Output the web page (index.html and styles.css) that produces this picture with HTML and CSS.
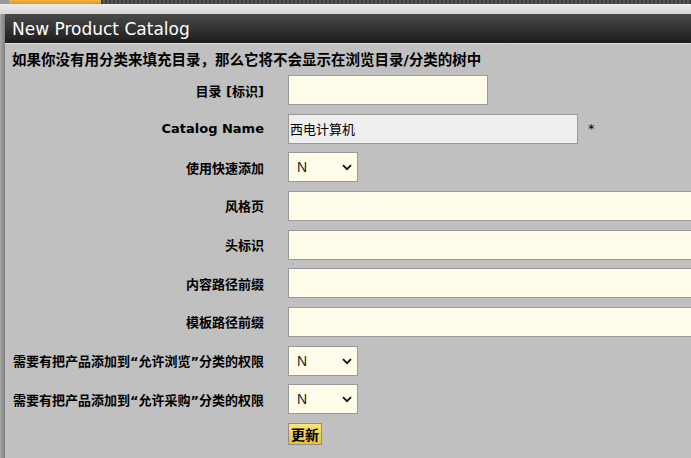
FILE: index.html
```html
<!DOCTYPE html>
<html lang="zh">
<head>
<meta charset="utf-8">
<title>New Product Catalog</title>
<link rel="stylesheet" href="styles.css">
</head>
<body>
<div class="topbar"><div class="lead"></div><div class="tab"></div><div class="texture"></div></div>
<div class="strip"></div>
<div class="main">
  <div class="gutter"></div>
  <div class="panel">
    <div class="header">New Product Catalog</div>
    <div class="content">
      <div class="desc">如果你没有用分类来填充目录，那么它将不会显示在浏览目录/分类的树中</div>
      <form class="form">
        <label class="label">目录 [标识]</label>
        <div class="field"><input class="input w200" type="text"></div>

        <label class="label">Catalog Name</label>
        <div class="field"><input class="input w290 grey" type="text" value="西电计算机"><span class="req">*</span></div>

        <label class="label">使用快速添加</label>
        <div class="field"><span class="sel"><select class="select"><option>N</option><option>Y</option></select><svg class="chev" width="10" height="7" viewBox="0 0 10 7"><path d="M1 1.2 L5 5.2 L9 1.2" fill="none" stroke="#111" stroke-width="1.8"/></svg></span></div>

        <label class="label">风格页</label>
        <div class="field"><input class="input wide" type="text"></div>

        <label class="label">头标识</label>
        <div class="field"><input class="input wide" type="text"></div>

        <label class="label">内容路径前缀</label>
        <div class="field"><input class="input wide" type="text"></div>

        <label class="label">模板路径前缀</label>
        <div class="field"><input class="input wide" type="text"></div>

        <label class="label">需要有把产品添加到“允许浏览”分类的权限</label>
        <div class="field"><span class="sel"><select class="select"><option>N</option><option>Y</option></select><svg class="chev" width="10" height="7" viewBox="0 0 10 7"><path d="M1 1.2 L5 5.2 L9 1.2" fill="none" stroke="#111" stroke-width="1.8"/></svg></span></div>

        <label class="label">需要有把产品添加到“允许采购”分类的权限</label>
        <div class="field"><span class="sel"><select class="select"><option>N</option><option>Y</option></select><svg class="chev" width="10" height="7" viewBox="0 0 10 7"><path d="M1 1.2 L5 5.2 L9 1.2" fill="none" stroke="#111" stroke-width="1.8"/></svg></span></div>

        <span class="label"></span>
        <div class="field top"><button class="btn" type="button">更新</button></div>
      </form>
    </div>
  </div>
</div>
</body>
</html>
```
FILE: styles.css
```css
html, body {
  margin: 0;
  padding: 0;
}
body {
  width: 691px;
  height: 458px;
  overflow: hidden;
  background: #c0c0c0;
  font-family: "DejaVu Sans", "Noto Sans CJK SC", sans-serif;
  color: #000;
}
.topbar {
  height: 4px;
  display: flex;
}
.topbar .lead {
  width: 9px;
  background: #9a9a9a;
}
.topbar .tab {
  width: 92px;
  background: linear-gradient(#f5b443, #e29422);
}
.topbar .texture {
  flex: 1;
  background: repeating-linear-gradient(90deg, #3c3c3c 0 2px, #5a5a5a 2px 4px);
}
.strip {
  height: 10px;
  background: linear-gradient(#ececec, #d6d6d6);
}
.main {
  display: flex;
  height: 444px;
}
.gutter {
  width: 5px;
  background: linear-gradient(90deg, #a8a8a8, #7e7e7e);
}
.panel {
  flex: 1;
  min-width: 0;
}
.header {
  height: 29px;
  background: linear-gradient(#4a4a4a, #1c1c1c);
  border-bottom: 1px solid #dedede;
  color: #fff;
  font-size: 17px;
  padding-left: 7px;
  display: flex;
  align-items: center;
}
.content {
  padding: 6px 0 0 7px;
}
.desc {
  font-weight: bold;
  font-size: 14.5px;
  line-height: 20px;
  white-space: nowrap;
}
.form {
  display: grid;
  grid-template-columns: 252px auto;
  column-gap: 24px;
  row-gap: 8.67px;
  grid-auto-rows: 30px;
  margin: 5px 0 0;
  align-items: center;
}
.label {
  text-align: right;
  font-size: 13px;
  font-weight: bold;
  white-space: nowrap;
}
.field {
  display: flex;
  align-items: center;
  gap: 10px;
}
.field.top {
  align-self: start;
}
.input {
  box-sizing: border-box;
  height: 30px;
  border: 1px solid #999;
  background: #fffce9;
  padding: 0 1px;
  font-family: "DejaVu Sans", "Noto Sans CJK SC", sans-serif;
  font-size: 13px;
  outline: none;
}
.w200 { width: 200px; }
.w290 { width: 290px; }
.wide { width: 420px; flex: none; }
.grey { background: #efefef; }
.req {
  font-size: 13px;
}
.sel {
  position: relative;
  display: inline-block;
  width: 70px;
  height: 30px;
}
.select {
  box-sizing: border-box;
  width: 70px;
  height: 30px;
  border: 1px solid #999;
  border-radius: 0;
  background-color: #fffce9;
  font-family: "Liberation Sans", sans-serif;
  font-size: 14px;
  padding-left: 8px;
  color: #222;
  appearance: none;
  -webkit-appearance: none;
  outline: none;
}
.chev {
  position: absolute;
  left: 54px;
  top: 12px;
  pointer-events: none;
}
.btn {
  box-sizing: border-box;
  height: 22px;
  width: 34px;
  padding: 0;
  border: 1px solid #8e8e8e;
  background: linear-gradient(#fbe57a, #e8c22e);
  font-family: "Noto Sans CJK SC", sans-serif;
  font-weight: bold;
  font-size: 14px;
  line-height: 20px;
  color: #000;
}
```
